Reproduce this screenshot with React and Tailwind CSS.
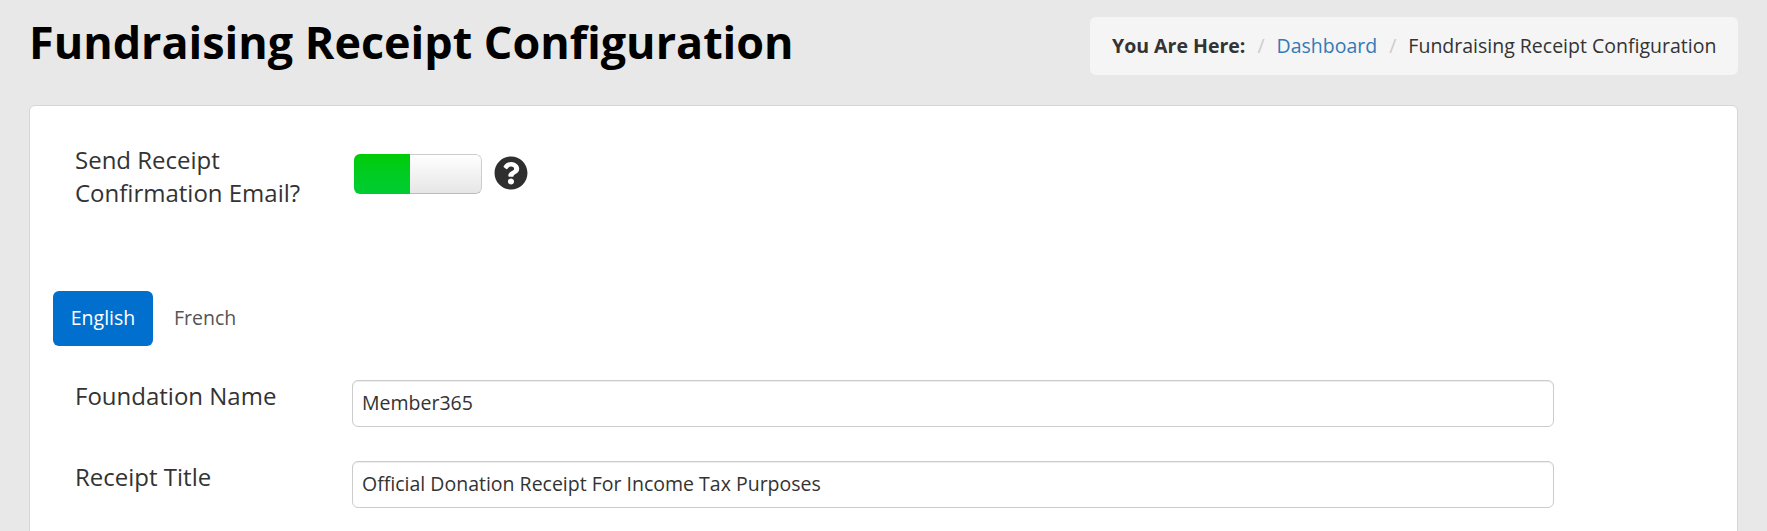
import React from 'react';
import { FaQuestionCircle } from 'react-icons/fa';

function Field({ label, value }) {
    return (
        <div className="flex flex-row items-start h-[81px]">
            <label className="w-[322px] pl-[45px] text-[24px] leading-[32px] text-[#333]">{label}</label>
            <input
                readOnly
                value={value}
                className="w-[1202px] h-[47px] pl-[9px] pr-[10px] pb-[2px] text-[19.5px] text-[#333] bg-white border border-[#ccc] rounded-[6px] shadow-[inset_0_1px_1px_rgba(0,0,0,0.075)] outline-none"
            />
        </div>
    );
}

export default function App() {
    return (
        <div className="h-[531px] overflow-hidden bg-[#e8e8e8] px-[29px] text-[#333]" style={{ fontFamily: '"Open Sans", sans-serif' }}>
            <div className="flex flex-row justify-between pt-[17px] h-[105px]">
                <h1 className="text-[44.9px] leading-[50px] font-bold text-black whitespace-nowrap">Fundraising Receipt Configuration</h1>
                <div className="flex flex-row items-center h-[58px] w-[648px] pl-[22px] bg-[#f5f5f5] rounded-[6px] text-[19.5px] whitespace-nowrap">
                    <b className="font-bold">You Are Here:</b>
                    <span className="px-[12px] text-[#ccc]">/</span>
                    <a className="text-[#337ab7]">Dashboard</a>
                    <span className="px-[12px] text-[#ccc]">/</span>
                    <span>Fundraising Receipt Configuration</span>
                </div>
            </div>

            <div className="h-[500px] bg-white border border-[#d6d6d6] rounded-[6px]">
                <div className="flex flex-row items-start h-[185px] pt-[37px]">
                    <label className="w-[324px] pl-[45px] pr-[10px] text-[24px] leading-[33px]">
                        Send Receipt Confirmation Email?
                    </label>
                    <div className="flex flex-row h-[40px] w-[128px] mt-[11px] rounded-[6px] overflow-hidden">
                        <div className="w-[56px] bg-gradient-to-b from-[#00cc00] to-[#00cc33]" />
                        <div className="flex-1 rounded-r-[6px] border border-l-0 border-[#ccc] border-b-[#bbb] bg-gradient-to-b from-white to-[#e6e6e6]" />
                    </div>
                    <FaQuestionCircle className="ml-[12px] mt-[13px] text-[34px] text-[#2f2f2f]" />
                </div>

                <div className="flex flex-row items-center pl-[23px] pb-[2px] h-[55px] text-[19.5px]">
                    <div className="flex items-center justify-center w-[100px] h-[55px] -mb-[2px] pb-[2px] rounded-[6px] bg-[#006fce] text-white">English</div>
                    <div className="pl-[21px] text-[#555]">French</div>
                </div>

                <div className="pt-[34px]">
                    <Field label="Foundation Name" value="Member365" />
                    <Field label="Receipt Title" value="Official Donation Receipt For Income Tax Purposes" />
                </div>
            </div>
        </div>
    );
}
